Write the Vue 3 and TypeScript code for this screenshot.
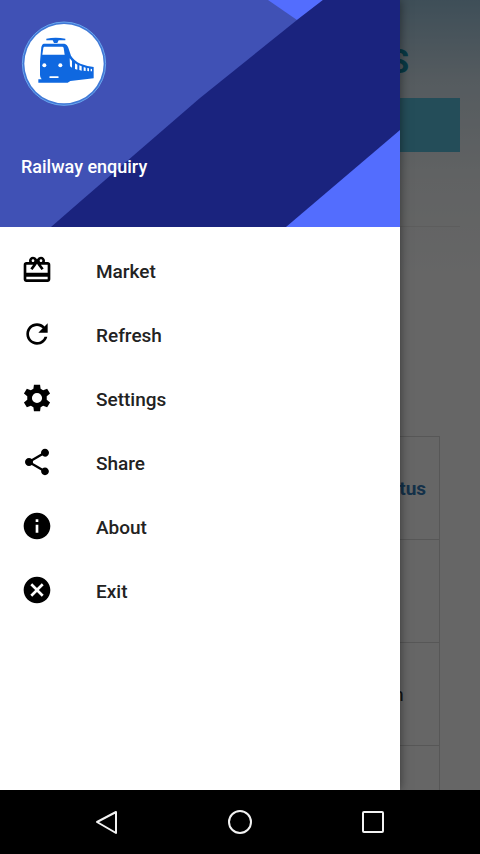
<script setup lang="ts">
interface MenuItem {
  label: string
  icon: string
}

const items: MenuItem[] = [
  {
    label: 'Market',
    icon: 'M20 6h-2.18c.11-.31.18-.65.18-1 0-1.66-1.34-3-3-3-1.05 0-1.96.54-2.5 1.35l-.5.67-.5-.68C10.96 2.54 10.05 2 9 2 7.34 2 6 3.34 6 5c0 .35.07.69.18 1H4c-1.11 0-1.99.89-1.99 2L2 19c0 1.11.89 2 2 2h16c1.11 0 2-.89 2-2V8c0-1.11-.89-2-2-2zm-5-2c.55 0 1 .45 1 1s-.45 1-1 1-1-.45-1-1 .45-1 1-1zM9 4c.55 0 1 .45 1 1s-.45 1-1 1-1-.45-1-1 .45-1 1-1zm11 15H4v-2h16v2zm0-5H4V8h5.08L7 10.83 8.62 12 11 8.76l1-1.36 1 1.36L15.38 12 17 10.83 14.92 8H20v6z',
  },
  {
    label: 'Refresh',
    icon: 'M17.65 6.35C16.2 4.9 14.21 4 12 4c-4.42 0-7.99 3.58-7.99 8s3.57 8 7.99 8c3.73 0 6.84-2.55 7.73-6h-2.08c-.82 2.33-3.04 4-5.65 4-3.31 0-6-2.69-6-6s2.69-6 6-6c1.66 0 3.14.69 4.22 1.78L13 11h7V4l-2.35 2.35z',
  },
  {
    label: 'Settings',
    icon: 'M9.7 2h4.6l.4 3.1 1.9 1.1 3-1.2 2.2 3.7-2.5 1.9v2.8l2.5 1.9-2.2 3.7-3-1.2-1.9 1.1L14.3 22H9.7l-.4-3.1-1.9-1.1-3 1.2-2.2-3.7 2.5-1.9v-2.8L2.2 8.7l2.2-3.7 3 1.2 1.9-1.1L9.7 2zM12 8.2a3.8 3.8 0 1 0 0 7.6 3.8 3.8 0 0 0 0-7.6z',
  },
  {
    label: 'Share',
    icon: 'M18 16.08c-.76 0-1.44.3-1.96.77L8.91 12.7c.05-.23.09-.46.09-.7s-.04-.47-.09-.7l7.05-4.11c.54.5 1.25.81 2.04.81 1.66 0 3-1.34 3-3s-1.34-3-3-3-3 1.34-3 3c0 .24.04.47.09.7L8.04 9.81C7.5 9.31 6.79 9 6 9c-1.66 0-3 1.34-3 3s1.34 3 3 3c.79 0 1.5-.31 2.04-.81l7.12 4.16c-.05.21-.08.43-.08.65 0 1.61 1.31 2.92 2.92 2.92s2.92-1.31 2.92-2.92-1.31-2.92-2.92-2.92z',
  },
  {
    label: 'About',
    icon: 'M12 2C6.48 2 2 6.48 2 12s4.48 10 10 10 10-4.48 10-10S17.52 2 12 2zm1 15h-2v-6h2v6zm0-8h-2V7h2v2z',
  },
  {
    label: 'Exit',
    icon: 'M12 2C6.47 2 2 6.47 2 12s4.47 10 10 10 10-4.47 10-10S17.53 2 12 2zm5 13.59L15.59 17 12 13.41 8.41 17 7 15.59 10.59 12 7 8.41 8.41 7 12 10.59 15.59 7 17 8.41 13.41 12 17 15.59z',
  },
]

const rows: string[] = ['', 'Run', '']
</script>

<template>
  <div class="screen">
    <div class="stage">
      <main class="page">
        <h1 class="title">STATUS</h1>
        <button class="search" type="button">Search</button>
        <hr class="rule" />
        <table class="results">
          <thead>
            <tr>
              <th></th>
              <th class="last"><a href="#status">Status</a></th>
            </tr>
          </thead>
          <tbody>
            <tr v-for="(row, i) in rows" :key="i">
              <td></td>
              <td class="last">{{ row }}</td>
            </tr>
          </tbody>
        </table>
      </main>

      <div class="scrim"></div>

      <aside class="drawer">
        <header class="banner">
          <svg class="art" viewBox="0 0 400 227" preserveAspectRatio="none" aria-hidden="true">
            <rect width="400" height="227" fill="#4051b5" />
            <path d="M268 0L297 20 323 0z" fill="#536dfe" />
            <path d="M323 0H400V227H51L82 200 200 98 297 20z" fill="#1a237e" />
            <path d="M400 130V227H286z" fill="#536dfe" />
          </svg>
          <svg class="avatar" viewBox="18 18 258 258" role="img" aria-label="Train">
            <circle cx="147" cy="146" r="125" fill="#3f78d6" stroke="#6aa6ee" stroke-width="3" />
            <circle cx="147" cy="146" r="119" fill="#fff" />
            <g fill="#0f68e0">
              <path d="M94 71Q122 66 151 71V76H131L127 84H117L113 76H94z" />
              <path d="M86 86H148Q156 87 160 98L168 122Q178 138 196 146 214 153 236 156V190L166 198 158 203H70V193H80Q75 188 75 180V140L79 96Q81 87 86 86z" />
            </g>
            <g fill="#fff">
              <path d="M88 95H142Q145 95 146 99L149 119H82L85 99Q86 95 88 95z" />
              <circle cx="88" cy="151" r="6" />
              <circle cx="136" cy="151" r="6" />
              <rect x="103" y="184" width="28" height="5" rx="2" />
              <path d="M164 130L171 138V158L165 154z" />
              <path d="M180 145L187 149V164L180 162z" />
              <path d="M193 151L200 154V167L193 165z" />
              <path d="M206 156L212 158V168L206 167z" />
              <path d="M217 159L222 160V169L217 168z" />
              <path d="M227 161L231 162V169L227 169z" />
            </g>
          </svg>
          <p class="name">Railway enquiry</p>
        </header>
        <nav>
          <ul class="menu">
            <li v-for="item in items" :key="item.label">
              <button class="item" type="button">
                <svg class="icon" viewBox="0 0 24 24" aria-hidden="true">
                  <path :d="item.icon" fill-rule="evenodd" />
                </svg>
                <span>{{ item.label }}</span>
              </button>
            </li>
          </ul>
        </nav>
      </aside>
    </div>

    <footer class="system">
      <button class="key" type="button" aria-label="Back">
        <svg viewBox="0 0 32 32"><path d="M6 16L25 6V27z" /></svg>
      </button>
      <button class="key" type="button" aria-label="Home">
        <svg viewBox="0 0 32 32"><circle cx="16" cy="16" r="11" /></svg>
      </button>
      <button class="key" type="button" aria-label="Recent apps">
        <svg viewBox="0 0 32 32"><rect x="6" y="6" width="20" height="20" rx="1" /></svg>
      </button>
    </footer>
  </div>
</template>

<style>
body {
  margin: 0;
  background: #000;
}
</style>

<style scoped>
.screen {
  display: flex;
  flex-direction: column;
  height: 100vh;
  font-family: Roboto, 'Liberation Sans', sans-serif;
}

button {
  border: 0;
  padding: 0;
  background: none;
  font: inherit;
  color: inherit;
  cursor: pointer;
}

.stage {
  position: relative;
  flex: 1;
  min-height: 0;
  overflow: hidden;
  background: #fff;
}

.page {
  display: flex;
  flex-direction: column;
  box-sizing: border-box;
  min-height: 100%;
  padding: 40px 20px 0;
  background: linear-gradient(#9cc4dc 0, #d4e4ee 80px, #f2f6f8 180px, #fff 280px);
}

.title {
  margin: 0;
  padding-right: 51px;
  text-align: right;
  font-size: 33px;
  line-height: 44px;
  font-weight: 700;
  color: #1490ac;
}

.search {
  height: 54px;
  margin-top: 14px;
  background: #5bc0de;
  color: #fff;
  font-size: 18px;
}

.rule {
  align-self: stretch;
  height: 1px;
  margin: 74px 0 209px;
  border: 0;
  background: #e8e8e8;
}

.results {
  margin: 0 20px;
  border-collapse: collapse;
  font-size: 19px;
  color: #333;
}

.results th,
.results td {
  height: 102px;
  padding: 0 12px;
  border: 1px solid #dadada;
  text-align: left;
}

.results .last {
  width: 56px;
}

.results a {
  color: #337ab7;
  text-decoration: none;
}

.scrim {
  position: absolute;
  inset: 0;
  background: rgba(0, 0, 0, 0.6);
}

.drawer {
  position: absolute;
  inset: 0 80px 0 0;
  background: #fff;
  box-shadow: 0 0 10px rgba(0, 0, 0, 0.5);
}

.banner {
  position: relative;
  display: flex;
  flex-direction: column;
  gap: 47px;
  box-sizing: border-box;
  padding: 21px 21px 47px;
}

.art {
  position: absolute;
  inset: 0;
  width: 100%;
  height: 100%;
}

.avatar {
  position: relative;
  width: 86px;
  height: 86px;
}

.name {
  position: relative;
  margin: 0;
  font-size: 18px;
  line-height: 26px;
  font-weight: 500;
  color: #fff;
}

.menu {
  margin: 0;
  padding: 12px 0 0;
  list-style: none;
}

.item {
  display: flex;
  align-items: flex-start;
  gap: 43px;
  box-sizing: border-box;
  width: 100%;
  height: 64px;
  padding: 15px 21px 0;
  text-align: left;
  font-size: 19px;
  line-height: 36px;
  font-weight: 500;
  color: #222;
}

.icon {
  width: 32px;
  height: 32px;
  fill: #000;
}

.system {
  display: grid;
  grid-template-columns: repeat(3, 1fr);
  height: 64px;
  padding: 0 40px;
  background: #000;
}

.key {
  display: flex;
  align-items: center;
  justify-content: center;
}

.key svg {
  width: 32px;
  height: 32px;
  fill: none;
  stroke: #f2f2f2;
  stroke-width: 2;
  stroke-linejoin: round;
}
</style>
